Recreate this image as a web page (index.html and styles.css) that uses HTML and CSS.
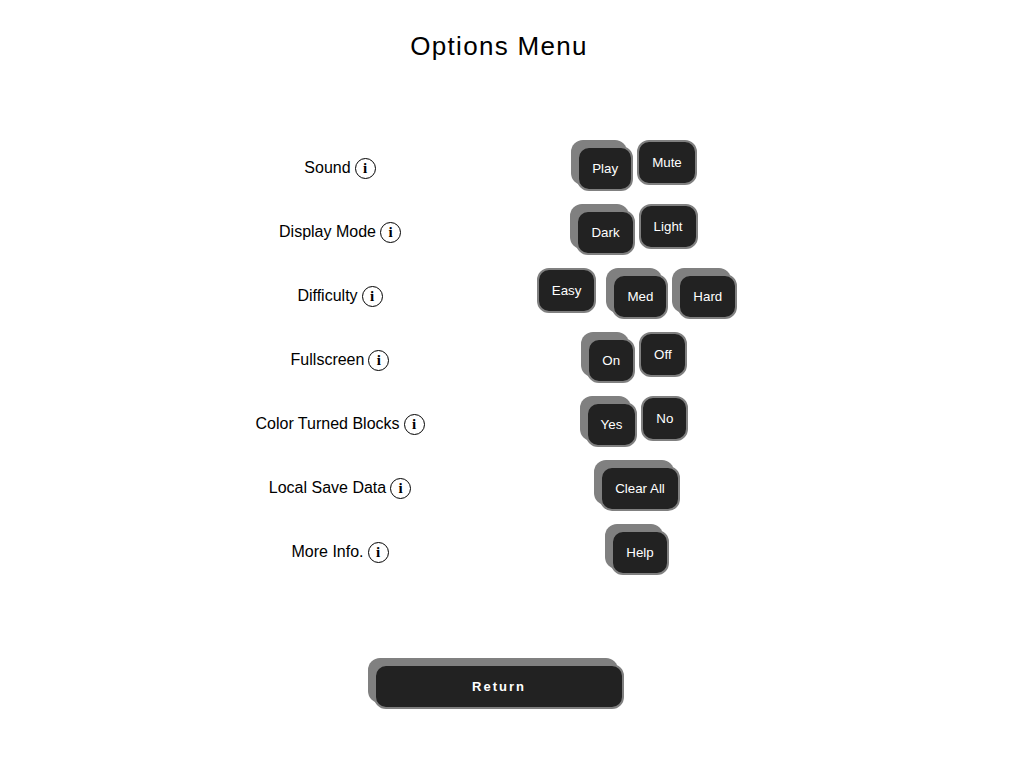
FILE: index.html
```html
<!DOCTYPE html>
<html lang="en">
<head>
<meta charset="utf-8">
<title>Options Menu</title>
<link rel="stylesheet" href="styles.css">
</head>
<body>
<main class="menu">
  <h1 class="title">Options Menu</h1>
  <div class="options">
    <div class="option">
      <div class="label">Sound <button class="info" type="button" aria-label="About sound">i</button></div>
      <div class="choices"><button class="btn" type="button">Play</button><button class="btn pressed" type="button">Mute</button></div>
    </div>
    <div class="option">
      <div class="label">Display Mode <button class="info" type="button" aria-label="About display mode">i</button></div>
      <div class="choices"><button class="btn" type="button">Dark</button><button class="btn pressed" type="button">Light</button></div>
    </div>
    <div class="option">
      <div class="label">Difficulty <button class="info" type="button" aria-label="About difficulty">i</button></div>
      <div class="choices"><button class="btn pressed" type="button">Easy</button><button class="btn" type="button">Med</button><button class="btn" type="button">Hard</button></div>
    </div>
    <div class="option">
      <div class="label">Fullscreen <button class="info" type="button" aria-label="About fullscreen">i</button></div>
      <div class="choices"><button class="btn" type="button">On</button><button class="btn pressed" type="button">Off</button></div>
    </div>
    <div class="option">
      <div class="label">Color Turned Blocks <button class="info" type="button" aria-label="About color turned blocks">i</button></div>
      <div class="choices"><button class="btn" type="button">Yes</button><button class="btn pressed" type="button">No</button></div>
    </div>
    <div class="option">
      <div class="label">Local Save Data <button class="info" type="button" aria-label="About local save data">i</button></div>
      <div class="choices"><button class="btn" type="button">Clear All</button></div>
    </div>
    <div class="option">
      <div class="label">More Info. <button class="info" type="button" aria-label="About more info">i</button></div>
      <div class="choices"><button class="btn" type="button">Help</button></div>
    </div>
  </div>
  <button class="btn return" type="button">Return</button>
</main>
</body>
</html>
```
FILE: styles.css
```css
body {
  margin: 0;
  background: #fff;
  color: #000;
  font: 16px/20px "Liberation Sans", Arial, sans-serif;
}

.menu {
  display: flex;
  flex-direction: column;
  align-items: center;
  padding: 31px 22px 31px 0;
}

.title {
  margin: 0 0 75px;
  font-size: 26px;
  line-height: 30px;
  font-weight: 400;
  letter-spacing: 0.05em;
}

.options {
  width: 100%;
  max-width: 600px;
}

.option {
  display: grid;
  grid-template-columns: 47fr 53fr;
  align-items: center;
  height: 64px;
}

.label {
  display: flex;
  justify-content: center;
  align-items: center;
  gap: 4px;
}

.info {
  box-sizing: border-box;
  width: 21px;
  height: 21px;
  padding: 0;
  border: 1px solid #000;
  border-radius: 50%;
  background: none;
  color: #000;
  font: bold 15px/18px "Liberation Serif", serif;
}

.choices {
  display: flex;
  justify-content: center;
  gap: 10px;
}

.btn {
  box-sizing: border-box;
  height: 45px;
  padding: 0 13px;
  border: 2px solid #808080;
  border-radius: 12px;
  background: #222;
  color: #fff;
  font-family: "Liberation Sans", Arial, sans-serif;
  box-shadow: -6px -6px 0 #808080;
}

.pressed {
  box-shadow: none;
  transform: translate(-6px, -6px);
}

.return {
  width: 250px;
  margin-top: 80px;
  font-size: 13px;
  font-weight: 700;
  letter-spacing: 2px;
}
```
